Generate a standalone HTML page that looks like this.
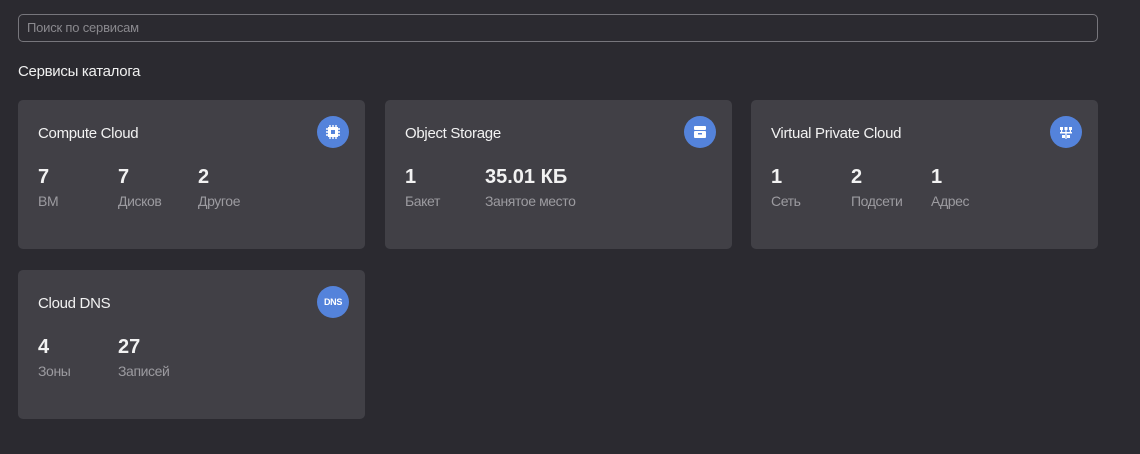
<!DOCTYPE html><html><head><meta charset="utf-8"><style>
body{margin:0;background:#2b2a30;font-family:"Liberation Sans",sans-serif;width:1140px;height:454px;overflow:hidden;position:relative}
.search{position:absolute;left:18px;top:14px;border:1px solid #77767c;border-radius:5px;color:#8a898e;font-size:13px;line-height:26px;padding-left:8px;box-sizing:border-box;width:1080px;height:28px;letter-spacing:-0.2px}
h2{position:absolute;left:18px;top:63px;margin:0;font-size:15px;color:#f0f0f0;font-weight:normal;letter-spacing:-0.3px}
.card{position:absolute;width:347px;height:149px;background:#414046;border-radius:5px}
.t{position:absolute;left:20px;top:25px;color:#f2f2f2;font-size:15px;letter-spacing:-0.3px}
.ic{position:absolute;left:299px;top:16px;width:32px;height:32px;border-radius:50%;background:#5483db;display:flex;align-items:center;justify-content:center;color:#fff}
.s{position:absolute;top:66px}
.n{color:#f2f2f2;font-size:20px;font-weight:bold;height:24px}
.l{color:#9c9ba0;font-size:14px;margin-top:3px;letter-spacing:-0.4px}
</style></head><body>
<div class="search">Поиск по сервисам</div>
<h2>Сервисы каталога</h2>
<div class="card" style="left:18px;top:100px"><div class="t">Compute Cloud</div>
<div class="ic"><svg width="14" height="14" viewBox="0 0 14 14"><rect x="2" y="2" width="10" height="10" fill="#fff"/><rect x="5" y="5" width="4" height="4" fill="#5483db"/><path d="M4 0v2M7 0v2M10 0v2M4 12v2M7 12v2M10 12v2M0 4h2M0 7h2M0 10h2M12 4h2M12 7h2M12 10h2" stroke="#fff" stroke-width="1.4"/></svg></div>
<div class="s" style="left:20px"><div class="n">7</div><div class="l">ВМ</div></div>
<div class="s" style="left:100px"><div class="n">7</div><div class="l">Дисков</div></div>
<div class="s" style="left:180px"><div class="n">2</div><div class="l">Другое</div></div></div>
<div class="card" style="left:385px;top:100px"><div class="t">Object Storage</div>
<div class="ic"><svg width="14" height="14" viewBox="0 0 14 14"><rect x="1" y="1" width="12" height="4" rx="1" fill="#fff"/><rect x="1" y="6" width="12" height="7" rx="1" fill="#fff"/><rect x="5" y="8" width="4" height="1.5" fill="#5483db"/></svg></div>
<div class="s" style="left:20px"><div class="n">1</div><div class="l">Бакет</div></div>
<div class="s" style="left:100px"><div class="n">35.01 КБ</div><div class="l">Занятое место</div></div></div>
<div class="card" style="left:751px;top:100px"><div class="t">Virtual Private Cloud</div>
<div class="ic"><svg width="14" height="14" viewBox="0 0 14 14" fill="#fff"><rect x="1" y="2" width="3" height="3"/><rect x="5.5" y="2" width="3" height="3"/><rect x="10" y="2" width="3" height="3"/><rect x="1" y="7" width="12" height="1.5"/><rect x="2" y="5" width="1.2" height="2"/><rect x="6.4" y="5" width="1.2" height="9"/><rect x="10.8" y="5" width="1.2" height="2"/><rect x="3" y="10" width="3" height="3"/><rect x="8" y="10" width="3" height="3"/></svg></div>
<div class="s" style="left:20px"><div class="n">1</div><div class="l">Сеть</div></div>
<div class="s" style="left:100px"><div class="n">2</div><div class="l">Подсети</div></div>
<div class="s" style="left:180px"><div class="n">1</div><div class="l">Адрес</div></div></div>
<div class="card" style="left:18px;top:270px"><div class="t">Cloud DNS</div>
<div class="ic" style="font-size:9px;font-weight:bold;letter-spacing:-0.3px">DNS</div>
<div class="s" style="left:20px"><div class="n">4</div><div class="l">Зоны</div></div>
<div class="s" style="left:100px"><div class="n">27</div><div class="l">Записей</div></div></div>
</body></html>
